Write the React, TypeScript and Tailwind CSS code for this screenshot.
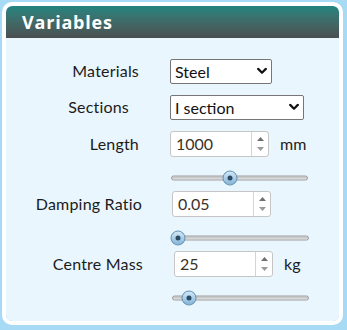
import type { ReactNode } from 'react';

const Chevron = () => (
  <svg width="10" height="7" viewBox="0 0 10 7" className="pointer-events-none absolute right-[5px] top-1/2 -translate-y-1/2">
    <path d="M1.2 1.4 L5 5.2 L8.8 1.4" fill="none" stroke="#111" strokeWidth="2.2" strokeLinecap="round" strokeLinejoin="round" />
  </svg>
);

const SelectBox = ({ value, width }: { value: string; width: string }) => (
  <div className={`relative h-[25px] ${width}`}>
    <select
      defaultValue={value}
      className="h-full w-full appearance-none rounded-[2px] border border-[#767676] bg-white pl-[4px] text-[16px] leading-[23px] text-[#111] outline-none font-[Lato,sans-serif]"
    >
      <option>{value}</option>
    </select>
    <Chevron />
  </div>
);

const NumberBox = ({ value }: { value: string }) => (
  <div className="flex h-[26px] w-[99px] rounded-[3px] border border-[#c6c6c6] bg-white">
    <span className="flex-1 pl-[5px] text-[16px] leading-[24px] text-[#3a3328] font-[Lato,sans-serif]">{value}</span>
    <div className="flex w-[17px] flex-col items-center justify-center gap-[6px] border-l border-[#d4d4d4]">
      <svg width="7" height="4" viewBox="0 0 7 4">
        <path d="M0 4 L3.5 0 L7 4 Z" fill="#707070" />
      </svg>
      <svg width="7" height="4" viewBox="0 0 7 4">
        <path d="M0 0 L3.5 4 L7 0 Z" fill="#9a9a9a" />
      </svg>
    </div>
  </div>
);

const Slider = ({ pos }: { pos: number }) => (
  <div className="relative h-4 w-[137px]">
    <div className="absolute left-0 right-0 top-1/2 h-[5px] -translate-y-1/2 rounded-full border border-[#9c9c9c] bg-gradient-to-b from-[#bdbdbd] to-[#e4e4e4]" />
    <div
      className="absolute top-1/2 flex h-[15px] w-[15px] -translate-x-1/2 -translate-y-1/2 items-center justify-center rounded-full border border-[#5d8db0] bg-gradient-to-b from-[#d2e8f7] to-[#85b5d8]"
      style={{ left: pos }}
    >
      <div className="h-[5px] w-[5px] rounded-full bg-[#2b4b63]" />
    </div>
  </div>
);

const Row = ({ label, pad, gap, mt, children }: { label: string; pad: string; gap: string; mt: string; children: ReactNode }) => (
  <div className={`flex h-[26px] items-center ${mt}`}>
    <div className={`w-[137px] text-right text-[16px] leading-[20px] tracking-[0.2px] text-[#1b1b1b] ${pad}`}>{label}</div>
    <div className={`flex items-center ${gap}`}>{children}</div>
  </div>
);

export default function App() {
  return (
    <div className="min-h-screen bg-[#a7dbf5] p-[2px] font-[Lato,sans-serif]">
      <div className="w-[341px] overflow-hidden rounded-[10px] border-4 border-white">
        {/* Header */}
        <div className="h-[32px] rounded-t-[6px] bg-gradient-to-b from-[#1f8580] to-[#4a4f50] pl-[16px] text-[18px] font-bold leading-[32px] tracking-[0.8px] text-white font-['Open_Sans',sans-serif]">
          Variables
        </div>

        {/* Body */}
        <div className="flex flex-col rounded-b-[6px] bg-[#eaf6fe] pb-[15px]">
          <Row label="Materials" pad="pr-[4px]" gap="pl-[27px]" mt="mt-[20px]">
            <SelectBox value="Steel" width="w-[102px]" />
          </Row>
          <Row label="Sections" pad="pr-[14px]" gap="pl-[27px]" mt="mt-[10px]">
            <SelectBox value="I section" width="w-[134px]" />
          </Row>
          <Row label="Length" pad="pr-[4px]" gap="pl-[27px] gap-[11px]" mt="mt-[11px]">
            <NumberBox value="1000" />
            <span className="text-[16px] text-[#1b1b1b]">mm</span>
          </Row>
          <div className="mt-[13px] pl-[165px]">
            <Slider pos={59} />
          </div>
          <Row label="Damping Ratio" pad="pr-[1px]" gap="pl-[29px]" mt="mt-[5px]">
            <NumberBox value="0.05" />
          </Row>
          <div className="mt-[13px] pl-[166px]">
            <Slider pos={6} />
          </div>
          <Row label="Centre Mass" pad="pr-0" gap="pl-[31px] gap-[11px]" mt="mt-[5px]">
            <NumberBox value="25" />
            <span className="text-[16px] text-[#1b1b1b]">kg</span>
          </Row>
          <div className="mt-[13px] pl-[166px]">
            <Slider pos={17} />
          </div>
        </div>
      </div>
    </div>
  );
}
